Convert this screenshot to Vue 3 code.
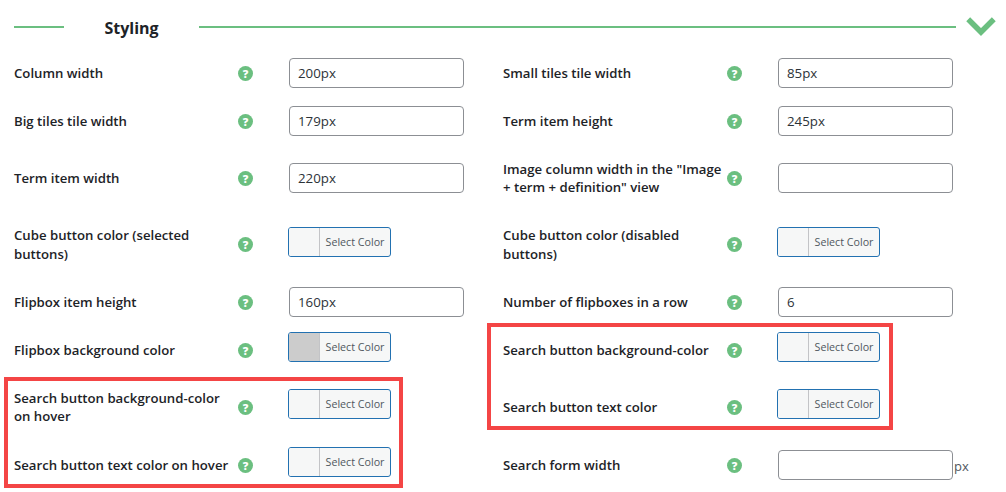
<script setup>
const rows = [
  { h: 30, cells: [
    { label: 'Column width', value: '200px' },
    { label: 'Small tiles tile width', value: '85px' },
  ] },
  { h: 30, cells: [
    { label: 'Big tiles tile width', value: '179px' },
    { label: 'Term item height', value: '245px' },
  ] },
  { h: 48, cells: [
    { label: 'Term item width', value: '220px' },
    { label: 'Image column width in the "Image + term + definition" view', value: '' },
  ] },
  { h: 49, cells: [
    { label: 'Cube button color (selected buttons)', color: true },
    { label: 'Cube button color (disabled buttons)', color: true },
  ] },
  { h: 30, cells: [
    { label: 'Flipbox item height', value: '160px' },
    { label: 'Number of flipboxes in a row', value: '6' },
  ] },
  { h: 30, cells: [
    { label: 'Flipbox background color', color: true, swatch: '#cccccc' },
    { label: 'Search button background-color', color: true },
  ] },
  { h: 48, cells: [
    { label: 'Search button background-color on hover', color: true },
    { label: 'Search button text color', color: true },
  ] },
  { h: 30, cells: [
    { label: 'Search button text color on hover', color: true },
    { label: 'Search form width', value: '', unit: 'px' },
  ] },
]
</script>

<template>
  <div class="panel">
    <div class="head">
      <span class="rule short"></span>
      <h2 class="title">Styling</h2>
      <span class="rule long"></span>
      <svg class="chev" width="30" height="19" viewBox="0 0 30 19" aria-hidden="true">
        <polyline points="2.2,2.2 15,15 27.8,2.2" fill="none" stroke="#6bbf80" stroke-width="5.5" />
      </svg>
    </div>
    <div class="rows">
      <div v-for="(row, i) in rows" :key="i" class="row" :class="'h' + row.h">
        <div v-for="cell in row.cells" :key="cell.label" class="field">
          <span class="label">{{ cell.label }}</span>
          <span class="help">?</span>
          <div v-if="cell.color" class="picker">
            <span class="swatch" :style="cell.swatch ? { background: cell.swatch } : null"></span>
            <span class="pick-text">Select Color</span>
          </div>
          <div v-else class="input-wrap">
            <input class="input" type="text" :value="cell.value" />
            <span v-if="cell.unit" class="unit">{{ cell.unit }}</span>
          </div>
        </div>
      </div>
    </div>
    <div class="mark mark-left"></div>
    <div class="mark mark-right"></div>
  </div>
</template>

<style>
html, body { margin: 0; background: #fff; overflow: hidden; }
</style>

<style scoped>
.panel {
  position: relative;
  width: 1006px;
  height: 492px;
  background: #fff;
  font-family: "Open Sans", "Noto Sans", sans-serif;
  color: #1d2327;
}
.head {
  display: flex;
  align-items: center;
  height: 24px;
  padding: 15px 0 0 14px;
}
.rule { height: 2px; background: #6bbf80; display: block; }
.rule.short { width: 50px; }
.rule.long { width: 757px; }
.title {
  width: 135px;
  margin: 0;
  padding-top: 2px;
  text-align: center;
  font-size: 16px;
  line-height: 22px;
  font-weight: 700;
  color: #1d2327;
}
.chev { margin-left: 10px; margin-top: -1px; }
.rows {
  display: flex;
  flex-direction: column;
  gap: 18px;
  padding: 19px 0 0 14px;
}
.row { display: grid; grid-template-columns: 489px 489px; }
.row:last-child { margin-top: 1px; }
.h30 { height: 30px; }
.h48 { height: 48px; }
.h49 { height: 49px; }
.field {
  display: grid;
  grid-template-columns: 224px 15px 1fr;
  align-items: center;
}
.label {
  font-size: 13.2px;
  line-height: 18.5px;
  font-weight: 600;
  color: #1d2327;
}
.help {
  width: 15px;
  height: 15px;
  border-radius: 50%;
  background: #6bbf80;
  color: #fff;
  font-size: 11px;
  line-height: 15px;
  font-weight: 800;
  text-align: center;
}
.input-wrap { display: flex; align-items: center; margin-left: 36px; }
.input {
  box-sizing: border-box;
  width: 175px;
  height: 30px;
  padding: 0 8px;
  border: 1px solid #8c8f94;
  border-radius: 4px;
  background: #fff;
  color: #2c3338;
  font: 400 13.3px "Open Sans", "Noto Sans", sans-serif;
  outline: none;
}
.unit {
  font-size: 13px;
  line-height: 20px;
  color: #50575e;
  margin: 2px 0 0 1px;
}
.picker {
  box-sizing: border-box;
  display: flex;
  width: 103px;
  height: 30px;
  margin: -6px 0 0 35px;
  border: 1px solid #2271b1;
  border-radius: 3px;
  background: #f6f7f7;
  overflow: hidden;
}
.swatch {
  width: 30px;
  border-right: 1px solid #c3c4c7;
  background: #f6f7f7;
  flex: none;
}
.pick-text {
  flex: 1;
  text-align: center;
  font-size: 10.7px;
  line-height: 29px;
  color: #50575e;
}
.mark {
  position: absolute;
  box-sizing: border-box;
  border: 4px solid #f44545;
  pointer-events: none;
}
.mark-left { left: 4px; top: 377px; width: 399px; height: 111px; }
.mark-right { left: 487px; top: 323px; width: 406px; height: 107px; }
</style>
